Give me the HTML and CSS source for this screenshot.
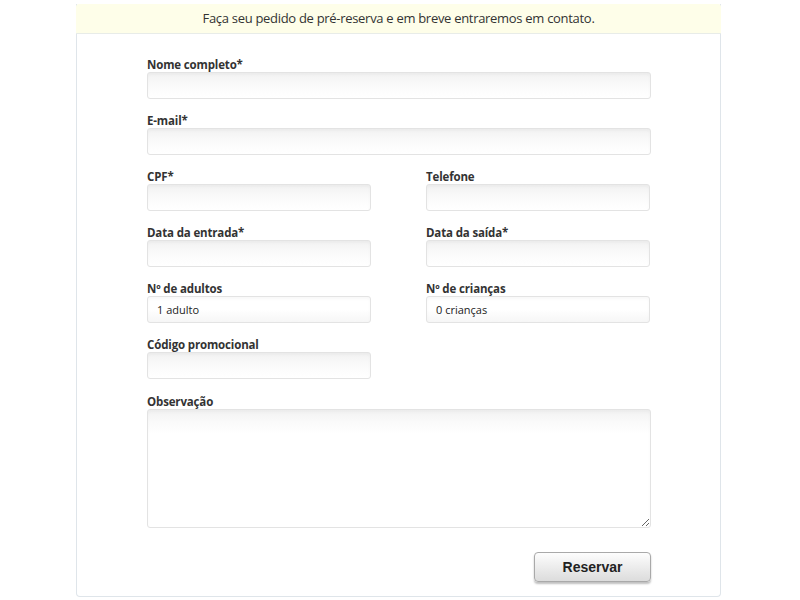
FILE: index.html
```html
<!DOCTYPE html>
<html lang="pt-BR">
<head>
<meta charset="utf-8">
<title>Pré-reserva</title>
<link rel="stylesheet" href="styles.css">
</head>
<body>
<div class="box">
  <div class="notice">Faça seu pedido de pré-reserva e em breve entraremos em contato.</div>
  <form class="form">
    <div class="field">
      <label class="label">Nome completo*</label>
      <input class="input" type="text">
    </div>
    <div class="field">
      <label class="label">E-mail*</label>
      <input class="input" type="text">
    </div>
    <div class="row">
      <div class="field">
        <label class="label">CPF*</label>
        <input class="input" type="text">
      </div>
      <div class="field">
        <label class="label">Telefone</label>
        <input class="input" type="text">
      </div>
    </div>
    <div class="row">
      <div class="field">
        <label class="label">Data da entrada*</label>
        <input class="input" type="text">
      </div>
      <div class="field">
        <label class="label">Data da saída*</label>
        <input class="input" type="text">
      </div>
    </div>
    <div class="row">
      <div class="field">
        <label class="label">Nº de adultos</label>
        <div class="input select">1 adulto</div>
      </div>
      <div class="field">
        <label class="label">Nº de crianças</label>
        <div class="input select">0 crianças</div>
      </div>
    </div>
    <div class="row promo">
      <div class="field">
        <label class="label">Código promocional</label>
        <input class="input" type="text">
      </div>
    </div>
    <div class="field">
      <label class="label">Observação</label>
      <textarea class="input textarea"></textarea>
    </div>
    <div class="actions">
      <button class="btn" type="button">Reservar</button>
    </div>
  </form>
</div>
</body>
</html>
```
FILE: styles.css
```css
* { box-sizing: border-box; }
html, body { margin: 0; padding: 0; background: #fff; }
body { font-family: "Open Sans", "DejaVu Sans", sans-serif; color: #333; }

.box {
  width: 645px;
  margin: 4px 0 0 76px;
  border: 1px solid #dfe5ea;
  border-top: none;
  border-radius: 0 0 4px 4px;
  height: 593px;
}
.notice {
  background: #fefee9;
  height: 30px;
  border-bottom: 1px solid #e8ece8;
  text-align: center;
  font-size: 13px;
  letter-spacing: -0.3px;
  line-height: 29px;
  color: #333;
  border-radius: 3px 3px 0 0;
  margin: 0 -1px;
}
.form {
  padding: 24px 69px 0 70px;
}
.field {
  display: flex;
  flex-direction: column;
  margin-bottom: 15px;
}
.label {
  font-size: 11.5px;
  letter-spacing: -0.15px;
  font-weight: 700;
  line-height: 14px;
  color: #333;
}
.input {
  display: block;
  width: 100%;
  height: 27px;
  margin: 0;
  border: 1px solid #e3e3e3;
  border-radius: 3px;
  background: linear-gradient(#f2f2f2, #fafafa 12px, #fff 24px);
  box-shadow: inset 0 2px 3px rgba(0,0,0,0.03);
  font-family: "Open Sans", sans-serif;
  font-size: 11px;
  padding: 0 9px;
}
.select {
  line-height: 26px;
  background: linear-gradient(#fff, #fff 50%, #f6f6f6);
  color: #222;
}
.row {
  display: grid;
  grid-template-columns: 224px 224px;
  column-gap: 55px;
}
.promo .field { margin-bottom: 16px; }
.textarea {
  height: 119px;
  resize: vertical;
  padding: 6px 9px;
}
.actions {
  display: flex;
  justify-content: flex-end;
  padding-top: 9px;
}
.btn {
  width: 117px;
  height: 30px;
  border: 1px solid #a9a9a9;
  border-radius: 4px;
  background: linear-gradient(#fdfdfd, #e9e9e9 60%, #dcdcdc);
  box-shadow: 0 2px 2px rgba(0,0,0,0.25);
  font-family: "Liberation Sans", Arial, sans-serif;
  font-weight: 700;
  font-size: 14px;
  color: #222;
  padding: 0;
}
```
